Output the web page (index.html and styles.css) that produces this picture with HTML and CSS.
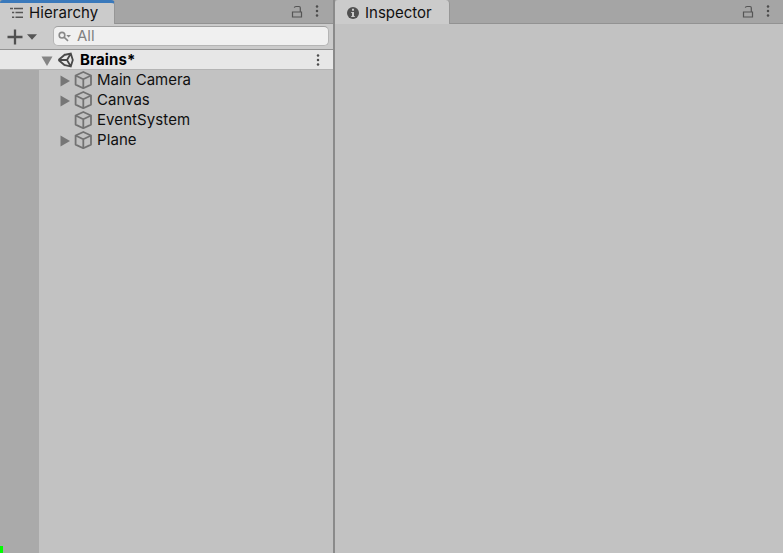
FILE: index.html
```html
<!DOCTYPE html>
<html lang="en">
<head>
<meta charset="utf-8">
<title>Editor</title>
<link rel="stylesheet" href="styles.css">
</head>
<body>
<svg class="defs" width="0" height="0">
  <symbol id="lock" viewBox="0 0 12 13"><path d="M1.500 7h9v5h-9zM9.300 7V2.800Q9.300 1.500 8 1.500H5Q3.500 1.500 3.300 2.600"/></symbol>
  <symbol id="dots" viewBox="0 0 4 12"><circle cx="2" cy="1.5" r="1.25"/><circle cx="2" cy="6" r="1.25"/><circle cx="2" cy="10.5" r="1.25"/></symbol>
  <symbol id="cube" viewBox="0 0 18 18"><path d="M9.300 1L17 4.500V13.600L9.300 17.200L1.600 13.600V4.500ZM1.600 4.500L9.300 8.300L17 4.500M9.300 8.300V17"/></symbol>
  <symbol id="right" viewBox="0 0 10 12"><path d="M.5 .5L10 6L.5 11.5Z"/></symbol>
</svg>
<div class="editor">
  <section class="panel hierarchy">
    <header class="tabs">
      <div class="tab active">
        <svg class="list" width="14" height="12" viewBox="0 0 14 12"><path d="M0 1.500h3M4 1.500h9M2 5.500h2.200M5.500 5.500h7.500M2 10.300h2.200M5.500 10.300h7.500"/></svg>
        <span>Hierarchy</span>
      </div>
      <div class="tools"><svg class="lock" width="12" height="13"><use href="#lock"/></svg><svg class="dots" width="4" height="12"><use href="#dots"/></svg></div>
    </header>
    <div class="toolbar">
      <svg class="plus" width="16" height="16" viewBox="0 0 16 16"><path d="M8 .5v15M.5 8h15"/></svg>
      <svg class="caret" width="10" height="6" viewBox="0 0 10 6"><path d="M0 .3h10L5 5.700Z"/></svg>
      <div class="search">
        <svg width="14" height="11" viewBox="0 0 14 11"><circle cx="4" cy="4.200" r="2.800"/><path d="M6 6.200L10 9.800"/><path class="solid" d="M8.300 4h4.700L10.600 6.500Z"/></svg>
        <span>All</span>
      </div>
    </div>
    <div class="scene">
      <svg class="down" width="12" height="10" viewBox="0 0 12 10"><path d="M.5 .5h11L6 10Z"/></svg>
      <svg class="unity" width="17" height="16" viewBox="0 0 17 16"><path d="M7 3L13.800 1.500L15.800 8L13.800 14.500L7 12.800M1.500 8L8 2.500M1.500 8L8 13.500M1.500 8H10L13.800 1.500M10 8L13.800 14.500"/></svg>
      <span>Brains*</span>
      <svg class="dots" width="4" height="12"><use href="#dots"/></svg>
    </div>
    <div class="tree">
      <div class="gutter"><i class="marker"></i></div>
      <div class="rows">
        <div class="row"><svg class="right" width="10" height="12"><use href="#right"/></svg><svg class="cube" width="18" height="18"><use href="#cube"/></svg><span>Main Camera</span></div>
        <div class="row"><svg class="right" width="10" height="12"><use href="#right"/></svg><svg class="cube" width="18" height="18"><use href="#cube"/></svg><span>Canvas</span></div>
        <div class="row"><i class="spacer"></i><svg class="cube" width="18" height="18"><use href="#cube"/></svg><span class="wide">EventSystem</span></div>
        <div class="row"><svg class="right" width="10" height="12"><use href="#right"/></svg><svg class="cube" width="18" height="18"><use href="#cube"/></svg><span class="wide">Plane</span></div>
      </div>
    </div>
  </section>
  <section class="panel inspector">
    <header class="tabs">
      <div class="tab">
        <svg class="info" width="12" height="12" viewBox="0 0 12 12"><circle cx="6" cy="6" r="6"/><path d="M5 1.800h2v2H5zM4.200 5h2.800v4h.8v1H4.200V9H5V6h-.8z"/></svg>
        <span>Inspector</span>
      </div>
      <div class="tools"><svg class="lock" width="12" height="13"><use href="#lock"/></svg><svg class="dots" width="4" height="12"><use href="#dots"/></svg></div>
    </header>
  </section>
</div>
</body>
</html>
```
FILE: styles.css
```css
* { box-sizing: border-box; }
body { margin: 0; overflow: hidden; font: 15px/20px Inter, "Liberation Sans", sans-serif; color: #101010; }
svg { display: block; flex: none; }
.defs { position: absolute; }
.editor { display: grid; grid-template-columns: 333px 448px; gap: 2px; width: 783px; height: 553px; background: #8a8a8a; }
.panel { display: flex; flex-direction: column; background: #c2c2c2; min-width: 0; }
.tabs { display: flex; justify-content: space-between; height: 24px; background: #a5a5a5; border-bottom: 1px solid #929292; }
.tab { display: flex; align-items: center; width: 115px; height: 24px; padding: 2px 0 0 10px; background: #cbcbcb; border-right: 1px solid #969696; border-radius: 3px 4px 0 0; }
.tab.active { border-top: 3px solid #3a79bb; padding: 0 0 1px 10px; }
.tab span { margin-left: 5px; letter-spacing: .08px; }
.inspector .tab { padding-left: 12px; }
.inspector .tab span { margin-left: 6px; letter-spacing: 0; }
.list { fill: none; stroke: #555; stroke-width: 1.400; }
.info { fill: #505050; }
.info path { fill: #cbcbcb; }
.tools { display: flex; align-items: center; gap: 12px; padding-right: 14px; }
.tools .dots { margin-top: -2px; }
.inspector .tools { padding-right: 13px; }
.lock { fill: none; stroke: #555; stroke-width: 1.200; margin-top: -1px; }
.dots { fill: #4c4c4c; }
.toolbar { display: flex; align-items: center; height: 26px; padding: 0 4px 0 7px; background: #cbcbcb; border-bottom: 1px solid #939393; }
.plus { stroke: #505050; stroke-width: 2.300; }
.caret { fill: #555; margin-left: 4px; }
.search { display: flex; align-items: center; width: 276px; height: 20px; margin: -1px 0 0 auto; padding-left: 4px; color: #818181; background: #f0f0f0; border: 1px solid #b5b5b5; border-top-color: #a0a0a0; border-radius: 5px; }
.search svg { fill: none; stroke: #888; stroke-width: 1.600; }
.search .solid { fill: #888; stroke: none; }
.search span { margin-left: 5px; }
.scene { display: flex; align-items: center; height: 20px; padding: 0 13px 0 41px; background: #e7e7e7; border-bottom: 1px solid #b4b4b4; font-weight: 700; }
.down { fill: #858585; margin-top: 2px; }
.unity { fill: none; stroke: #484848; stroke-width: 1.800; margin-left: 4px; }
.scene span { margin-left: 6px; letter-spacing: .1px; color: #000; }
.scene .dots { margin-left: auto; }
.tree { display: flex; flex: 1; }
.gutter { display: flex; align-items: flex-end; width: 39px; background: #aaa; }
.marker { width: 3px; height: 7px; background: #0f0; }
.rows { flex: 1; }
.row { display: flex; align-items: center; height: 20px; padding-left: 21px; }
.right { fill: #767676; margin-top: 1px; }
.spacer { width: 10px; }
.cube { fill: none; stroke: #727272; stroke-width: 1.800; stroke-linejoin: round; margin-left: 4px; }
.row span { margin-left: 5px; }
.row .wide { letter-spacing: .09px; }
```
